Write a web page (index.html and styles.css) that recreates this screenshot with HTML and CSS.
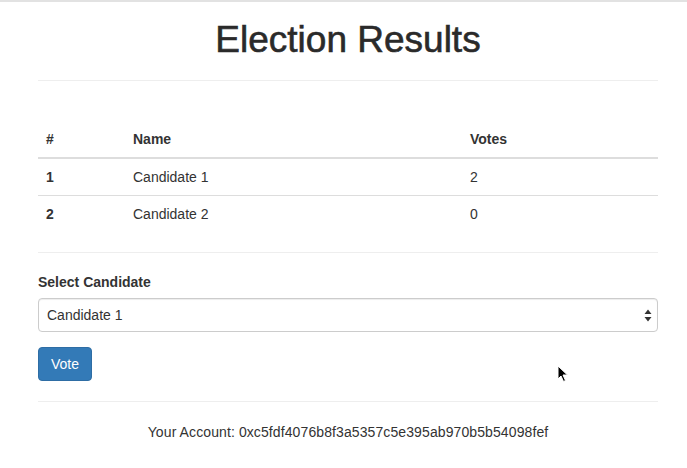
FILE: index.html
```html
<!DOCTYPE html>
<html>
<head>
<meta charset="utf-8">
<link rel="stylesheet" href="styles.css">
</head>
<body>
<div class="page">
  <div class="container">
    <h1 class="title">Election Results</h1>
    <hr>
    <table class="results">
      <thead>
        <tr><th class="c-num">#</th><th class="c-name">Name</th><th>Votes</th></tr>
      </thead>
      <tbody>
        <tr><th>1</th><td>Candidate 1</td><td>2</td></tr>
        <tr><th>2</th><td>Candidate 2</td><td>0</td></tr>
      </tbody>
    </table>
    <hr class="hr-after-table">
    <form class="vote-form">
      <div class="form-group">
        <label class="label">Select Candidate</label>
        <div class="select">
          <span class="select-value">Candidate 1</span>
          <svg class="select-arrows" width="8" height="13" viewBox="0 0 8 13"><path d="M4 0.5 L7.5 5 L0.5 5 Z M4 12.5 L7.5 8 L0.5 8 Z" fill="#333"/></svg>
        </div>
      </div>
      <button type="button" class="btn">Vote</button>
    </form>
    <hr>
    <p class="account">Your Account: 0xc5fdf4076b8f3a5357c5e395ab970b5b54098fef</p>
  </div>
  <svg class="cursor" width="12" height="18" viewBox="0 0 12 18"><path d="M1 1 L1 14 L4 11 L6.5 16.5 L8.5 15.5 L6 10 L10.5 10 Z" fill="#000" stroke="#fff" stroke-width="1"/></svg>
</div>
</body>
</html>
```
FILE: styles.css
```css
* { box-sizing: border-box; }
html, body { margin: 0; padding: 0; background: #fff; }
body {
  font-family: "Liberation Sans", Arial, Helvetica, sans-serif;
  font-size: 14px;
  line-height: 20px;
  color: #333;
}
.page {
  position: relative;
  border-top: 2px solid #e2e2e2;
  height: 468px;
  overflow: hidden;
}
.container {
  margin-left: 38px;
  width: 620px;
}
.title {
  font-size: 37px;
  font-weight: normal;
  line-height: 40px;
  text-align: center;
  margin: 18px 0 0 0;
  color: #2a2a2a;
  -webkit-text-stroke: 0.6px #2a2a2a;
}
hr {
  border: 0;
  border-top: 1px solid #eee;
  margin: 20px 0;
}
.results {
  width: 100%;
  border-collapse: collapse;
  margin-top: 40px;
  margin-bottom: 20px;
}
.results th, .results td {
  text-align: left;
  padding: 8px 8px;
  line-height: 20px;
  vertical-align: top;
}
.results th { font-weight: bold; }
.results thead th { border-bottom: 2px solid #ddd; }
.results tbody tr + tr th, .results tbody tr + tr td { border-top: 1px solid #ddd; }
.c-num { width: 87px; }
.c-name { width: 337px; }
.hr-after-table { margin-bottom: 19px; }
.vote-form { margin: 0; }
.form-group { margin-bottom: 15px; }
.label {
  display: block;
  font-weight: bold;
  margin-bottom: 6px;
}
.select {
  display: flex;
  align-items: center;
  justify-content: space-between;
  height: 34px;
  padding: 0 5px 0 8px;
  border: 1px solid #ccc;
  border-radius: 4px;
  box-shadow: inset 0 1px 1px rgba(0,0,0,0.075);
}
.btn {
  display: block;
  height: 34px;
  padding: 0 12px;
  font-family: inherit;
  font-size: 14px;
  color: #fff;
  background: #337ab7;
  border: 1px solid #2e6da4;
  border-radius: 4px;
}
.account {
  text-align: center;
  margin: 0;
  letter-spacing: 0.1px;
}
.cursor {
  position: absolute;
  left: 557px;
  top: 363px;
}
```
